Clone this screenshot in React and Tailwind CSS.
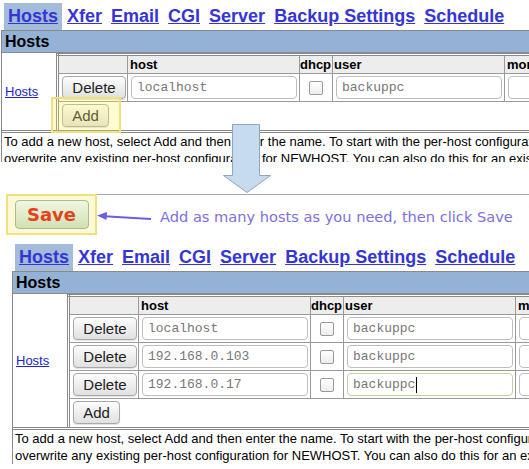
const TABS = ['Hosts', 'Xfer', 'Email', 'CGI', 'Server', 'Backup Settings', 'Schedule']

const LINE1 = 'To add a new host, select Add and then enter the name. To start with the per-host configuration from another host, enter the host name as NEWHOST=COPYHOST. This will'
const LINE2 = 'overwrite any existing per-host configuration for NEWHOST. You can also do this for an existing host.'

function Btn({ children, w }) {
  return (
    <button className={`h-[23px] ${w} rounded-[4px] border border-[#a8a8a8] bg-linear-to-b from-[#fdfdfd] to-[#e0e0e0] text-[15px] leading-[21px] text-[#222] shadow-[0_1px_1px_rgba(0,0,0,0.12)]`}>
      {children}
    </button>
  )
}

function Field({ value, w, focus }) {
  return (
    <div className={`flex h-[23px] ${w} items-center rounded-[4px] border ${focus ? 'border-[#bcd4a4]' : 'border-[#bdbdbd]'} bg-white px-[5px] font-['Liberation_Mono',monospace] text-[13px] text-[#777]`}>
      {value}
      {focus && <span className="ml-[1px] h-[16px] w-[1px] bg-black" />}
    </div>
  )
}

function Check() {
  return <div className="mx-auto h-[14px] w-[14px] rounded-[2px] border border-[#9a9a9a] bg-linear-to-b from-white to-[#ececec]" />
}

function Shot({ rows, focusLast }) {
  return (
    <div className="w-[760px] font-['Liberation_Sans',Arial,sans-serif] text-black">
      {/* tabs */}
      <div className="flex gap-[1px] pt-[3px] pl-[3px]">
        {TABS.map((t, i) => (
          <a key={t} className={`px-[4px] py-[3px] text-[18px] font-bold leading-[21px] text-[#3535d6] underline ${i === 0 ? 'bg-[#a2bcd9]' : ''}`}>
            {t}
          </a>
        ))}
      </div>

      <div className="border-l border-[#8a8a8a]">
        {/* section header */}
        <div className="h-[23px] border-y border-[#8a8a8a] bg-[#93b2d6] pl-[3px] text-[16px] font-bold leading-[21px]">Hosts</div>

        {/* body */}
        <div className="flex border-b-[3px] border-double border-[#8a8a8a]">
          <div className="flex w-[54px] shrink-0 items-center pl-[3px]">
            <a className="text-[13px] text-[#2424cc] underline">Hosts</a>
          </div>
          <table className="w-[650px] table-fixed border-collapse border-x-[3px] border-t-[3px] border-double border-[#8a8a8a] text-left">
            <colgroup>
              <col className="w-[70px]" />
              <col className="w-[172px]" />
              <col className="w-[33px]" />
              <col className="w-[172px]" />
              <col className="w-[203px]" />
            </colgroup>
            <thead>
              <tr className="h-[19px] bg-[#ededed] text-[13px] font-bold leading-[15px]">
                <th className="border border-[#9a9a9a]" />
                <th className="border border-[#9a9a9a] pl-[2px]">host</th>
                <th className="border border-[#9a9a9a]">dhcp</th>
                <th className="border border-[#9a9a9a] pl-[1px]">user</th>
                <th className="border border-[#9a9a9a] pl-[2px]">moreUsers</th>
              </tr>
            </thead>
            <tbody>
              {rows.map((r, i) => (
                <tr key={r} className="h-[28px]">
                  <td className="border border-[#9a9a9a] px-[3px]"><Btn w="w-[64px]">Delete</Btn></td>
                  <td className="border border-[#9a9a9a] px-[3px]"><Field value={r} w="w-[166px]" /></td>
                  <td className="border border-[#9a9a9a]"><Check /></td>
                  <td className="border border-[#9a9a9a] px-[3px]"><Field value="backuppc" w="w-[166px]" focus={focusLast && i === rows.length - 1} /></td>
                  <td className="border border-[#9a9a9a] px-[3px]"><Field value="" w="w-[190px]" /></td>
                </tr>
              ))}
              <tr className="h-[28px]">
                <td colSpan={5} className="border border-b-0 border-[#9a9a9a] px-[3px]"><Btn w="w-[47px]">Add</Btn></td>
              </tr>
            </tbody>
          </table>
        </div>

        {/* help text */}
        <div className="whitespace-nowrap pl-[2px] text-[13px] leading-[17px]">
          <div>{LINE1}</div>
          <div>{LINE2}</div>
        </div>
      </div>
    </div>
  )
}

export default function App() {
  return (
    <div className="relative h-[469px] w-[529px] overflow-hidden bg-white">
      {/* before */}
      <div className="relative h-[162px] overflow-hidden pl-[1px]">
        <Shot rows={['localhost']} />
        <div className="absolute left-[51px] top-[97px] h-[36px] w-[70px] border-2 border-[#f1e07e] bg-[rgba(255,240,90,0.28)]" />
      </div>

      {/* big down arrow */}
      <svg className="absolute left-[220px] top-[122px]" width="54" height="73" viewBox="0 0 54 73">
        <polygon points="12.5,2.5 39.5,2.5 39.5,53.5 50.5,53.5 27,70.5 3.5,53.5 12.5,53.5" fill="#c7dbef" stroke="#8ea6bf" strokeWidth="1" />
      </svg>

      {/* save hint */}
      <div className="mt-[32px] flex h-[41px]">
        <div className="ml-[6px] flex w-[91px] items-center justify-center border-2 border-[#f1e07e] bg-[#fdf9d8]">
          <div className="flex h-[29px] w-[74px] items-center justify-center rounded-[4px] border border-[#a9bd8a] bg-linear-to-b from-[#f1f6e2] to-[#d2e1b3] font-['DejaVu_Sans',sans-serif] text-[18px] font-bold text-[#e4421c]">
            Save
          </div>
        </div>
        <div className="flex flex-1 items-center border-t border-[#9ba8be] pt-[3px]">
          <svg width="56" height="10" viewBox="0 0 56 10" className="shrink-0">
            <line x1="3" y1="4" x2="54" y2="7" stroke="#6a5ee6" strokeWidth="2" />
            <polygon points="0,3.5 10,0 9.5,8" fill="#6a5ee6" />
          </svg>
          <span className="ml-[7px] whitespace-nowrap font-['DejaVu_Sans',sans-serif] text-[14.6px] text-[#7b6fe2]">
            Add as many hosts as you need, then click Save
          </span>
        </div>
      </div>

      {/* after */}
      <div className="mt-[6px] pl-[12px]">
        <Shot rows={['localhost', '192.168.0.103', '192.168.0.17']} focusLast />
      </div>
    </div>
  )
}
